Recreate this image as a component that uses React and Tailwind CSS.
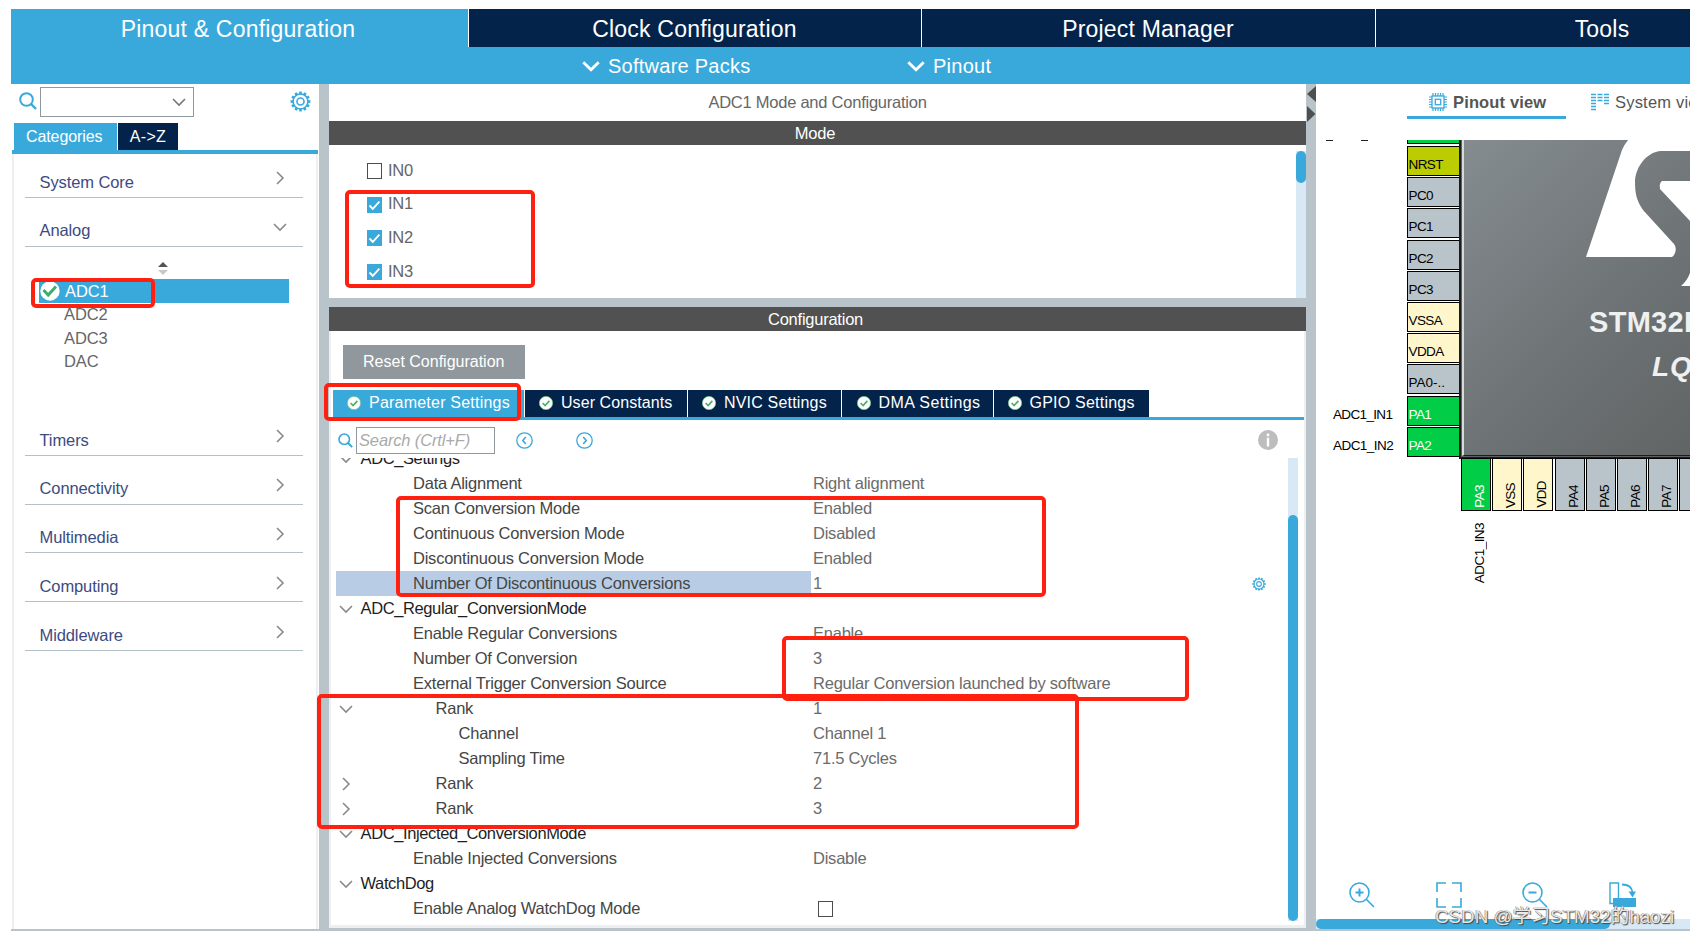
import React from 'react'

const categoriesTop = [
  { name: 'System Core', open: false },
  { name: 'Analog', open: true },
]

const categoriesBottom = ['Timers', 'Connectivity', 'Multimedia', 'Computing', 'Middleware']

const channels = [
  { name: 'IN0', checked: false },
  { name: 'IN1', checked: true },
  { name: 'IN2', checked: true },
  { name: 'IN3', checked: true },
]

const configTabs = [
  { name: 'Parameter Settings', className: 'w-[191px] pl-[14px] bg-[#39a9dc] tracking-[0.22px]' },
  { name: 'User Constants', className: 'w-[162px] pl-[14px] bg-[#03234b] tracking-[0.07px]' },
  { name: 'NVIC Settings', className: 'w-[152.5px] pl-[14px] bg-[#03234b] tracking-[0.18px]' },
  { name: 'DMA Settings', className: 'w-[151px] pl-[15px] bg-[#03234b] tracking-[0.42px]' },
  { name: 'GPIO Settings', className: 'w-[155px] pl-[14px] bg-[#03234b] tracking-[0.22px]' },
]

const rows = [
  { label: 'ADC_Settings', type: 'group', arrow: 'down' },
  { label: 'Data Alignment', type: 'item', value: 'Right alignment' },
  { label: 'Scan Conversion Mode', type: 'item', value: 'Enabled' },
  { label: 'Continuous Conversion Mode', type: 'item', value: 'Disabled' },
  { label: 'Discontinuous Conversion Mode', type: 'item', value: 'Enabled' },
  { label: 'Number Of Discontinuous Conversions', type: 'item', value: '1', selected: true },
  { label: 'ADC_Regular_ConversionMode', type: 'group', arrow: 'down' },
  { label: 'Enable Regular Conversions', type: 'item', value: 'Enable' },
  { label: 'Number Of Conversion', type: 'item', value: '3' },
  { label: 'External Trigger Conversion Source', type: 'item', value: 'Regular Conversion launched by software' },
  { label: 'Rank', type: 'rank', arrow: 'down', value: '1' },
  { label: 'Channel', type: 'sub', value: 'Channel 1' },
  { label: 'Sampling Time', type: 'sub', value: '71.5 Cycles' },
  { label: 'Rank', type: 'rank', arrow: 'right', value: '2' },
  { label: 'Rank', type: 'rank', arrow: 'right', value: '3' },
  { label: 'ADC_Injected_ConversionMode', type: 'group', arrow: 'down' },
  { label: 'Enable Injected Conversions', type: 'item', value: 'Disable' },
  { label: 'WatchDog', type: 'group', arrow: 'down' },
  { label: 'Enable Analog WatchDog Mode', type: 'item', checkbox: true },
]

const indent = {
  group: 'pl-[5.5px] text-[#1e1e1e] tracking-[-0.38px]',
  item: 'pl-[58px] text-[#454545] tracking-[-0.23px]',
  rank: 'pl-[80.5px] text-[#454545] tracking-[-0.23px]',
  sub: 'pl-[103.5px] text-[#454545] tracking-[-0.23px]',
}

const pinColors = {
  reset: 'bg-[#bbcc00] text-black',
  io: 'bg-[#b9c4ca] text-black',
  power: 'bg-[#fff6cc] text-black',
  used: 'bg-[#02cd46] text-white',
}

const leftPins = [
  { name: 'NRST', kind: 'reset' },
  { name: 'PC0', kind: 'io' },
  { name: 'PC1', kind: 'io' },
  { name: 'PC2', kind: 'io' },
  { name: 'PC3', kind: 'io' },
  { name: 'VSSA', kind: 'power' },
  { name: 'VDDA', kind: 'power' },
  { name: 'PA0-..', kind: 'io' },
  { name: 'PA1', kind: 'used' },
  { name: 'PA2', kind: 'used' },
]

const bottomPins = [
  { name: 'PA3', kind: 'used' },
  { name: 'VSS', kind: 'power' },
  { name: 'VDD', kind: 'power' },
  { name: 'PA4', kind: 'io' },
  { name: 'PA5', kind: 'io' },
  { name: 'PA6', kind: 'io' },
  { name: 'PA7', kind: 'io' },
  { name: '', kind: 'io' },
]

function Chevron({ dir = 'down', className = '', stroke = '#8a8a8a', width = 1.6 }) {
  return (
    <svg viewBox="0 0 14 14" className={className} fill="none" stroke={stroke} strokeWidth={width}>
      <path d={dir === 'down' ? 'M1 4l6 6 6-6' : 'M4 1l6 6-6 6'} />
    </svg>
  )
}

function Gear({ className }) {
  const teeth = [0, 30, 60, 90, 120, 150, 180, 210, 240, 270, 300, 330]
  return (
    <svg viewBox="0 0 22 22" className={className} fill="none" stroke="#39a9dc">
      <circle cx="11" cy="11" r="7.8" strokeWidth="1.7" />
      <circle cx="11" cy="11" r="3.7" strokeWidth="1.7" />
      {teeth.map((a) => (
        <path key={a} d="M11 3.4V0.6" strokeWidth="2.8" transform={`rotate(${a} 11 11)`} />
      ))}
    </svg>
  )
}

function SearchIcon({ className }) {
  return (
    <svg viewBox="0 0 18 18" className={className} fill="none" stroke="#39a9dc" strokeWidth="2">
      <circle cx="7.5" cy="7.5" r="6.3" />
      <path d="M12 12l5 5" strokeWidth="2.4" />
    </svg>
  )
}

function Checkbox({ checked }) {
  if (!checked) {
    return <span className="block w-[15px] h-[16px] border border-[#4c4c4c] bg-white" />
  }
  return (
    <span className="block w-[15px] h-[16px] bg-[#39a9dc]">
      <svg viewBox="0 0 15 16" className="w-full h-full" fill="none" stroke="#fff" strokeWidth="1.8">
        <path d="M2.5 8.5l3.3 3.4 6.6-7.2" />
      </svg>
    </span>
  )
}

function TabCheck() {
  return (
    <svg viewBox="0 0 14 14" className="w-[14px] h-[14px] shrink-0">
      <circle cx="7" cy="7" r="6.6" fill="#fff" stroke="#7cc893" strokeWidth="0.8" />
      <path d="M3.6 7l2.5 2.5 4.3-4.6" fill="none" stroke="#4cb06e" strokeWidth="1.7" />
    </svg>
  )
}

function Header() {
  return (
    <header className="ml-[10.5px] h-[75px] shrink-0 bg-[#39a9dc] text-white flex flex-col">
      <div className="flex h-[38px] text-[23px] leading-[40px] text-center whitespace-nowrap tracking-[0.2px]">
        <div className="w-[457px] shrink-0 pr-[2px]">Pinout &amp; Configuration</div>
        <div className="w-[453px] shrink-0 bg-[#03234b] border-l border-white">Clock Configuration</div>
        <div className="w-[454px] shrink-0 bg-[#03234b] border-l border-white">Project Manager</div>
        <div className="w-[454px] shrink-0 bg-[#03234b] border-l border-white">Tools</div>
      </div>
      <div className="flex h-[37px] items-center text-[20px] tracking-[0.25px]">
        <div className="flex items-center w-[325px] ml-[571px]">
          <Chevron className="w-[18px] h-[18px] mr-[8.5px]" stroke="#fff" width={2.2} />
          Software Packs
        </div>
        <div className="flex items-center">
          <Chevron className="w-[18px] h-[18px] mr-[8.5px]" stroke="#fff" width={2.2} />
          Pinout
        </div>
      </div>
    </header>
  )
}

function Category({ name, open }) {
  return (
    <div className="ml-[11px] w-[278px] h-[48.8px] shrink-0 pt-[11px] border-b border-[#b3c0c8] flex items-center justify-between pl-[14.5px] pr-[16px] text-[16.5px] tracking-[-0.1px] text-[#3c4b82]">
      <span className="pt-[7px]">{name}</span>
      <Chevron dir={open ? 'down' : 'right'} className="w-[14px] h-[14px]" />
    </div>
  )
}

function Sidebar() {
  return (
    <aside className="ml-[11px] w-[308px] shrink-0 flex flex-col">
      <div className="flex h-[39px] shrink-0 pt-[3px]">
        <SearchIcon className="w-[18px] h-[18px] ml-[8px] mt-[5px]" />
        <div className="ml-[3px] w-[154px] h-[30px] border border-[#8f989f] flex items-center justify-end pr-[7px]">
          <Chevron className="w-[14px] h-[14px]" stroke="#777" />
        </div>
        <Gear className="w-[21px] h-[21px] ml-[96px] mt-[4px]" />
      </div>
      <div className="flex h-[27px] shrink-0 pl-[3px] text-white text-[16px] leading-[28px]">
        <div className="w-[103px] bg-[#39a9dc] pl-[12px] tracking-[-0.1px]">Categories</div>
        <div className="w-[60px] ml-px bg-[#03234b] text-center tracking-[0.3px]">A-&gt;Z</div>
      </div>
      <div className="h-[3.5px] shrink-0 w-[306px] ml-px bg-[#39a9dc]" />
      <div className="grow ml-px w-[306px] border-x-2 border-[#eeeff0] flex flex-col">
        {/* first divider sits close under the tabs */}
        <div className="-mt-[4.5px]" />
        {categoriesTop.map((c) => (
          <Category key={c.name} {...c} />
        ))}
        <div className="h-[160.5px] shrink-0 pt-[15.5px] text-[16.5px] text-[#666]">
          <div className="h-[17px] pl-[144px]">
            <svg viewBox="0 0 10 13" className="w-[10px] h-[13px]">
              <path d="M0 5l5-5 5 5z" fill="#555" />
              <path d="M0 8h10l-5 5z" fill="#c8c8c8" />
            </svg>
          </div>
          <div className="ml-[25px] w-[250px] h-[24px] bg-[#39a9dc] text-white flex items-center tracking-[-0.1px]">
            <svg viewBox="0 0 20 20" className="w-[20px] h-[20px] ml-[1px] mr-[5px]">
              <circle cx="10" cy="10" r="9.7" fill="#fff" />
              <path d="M3.5 9l4.7 5L16 5.5" fill="none" stroke="#3fae68" strokeWidth="3" />
            </svg>
            ADC1
          </div>
          {['ADC2', 'ADC3', 'DAC'].map((name) => (
            <div key={name} className="h-[23.7px] leading-[23px] pl-[50px] tracking-[-0.1px]">{name}</div>
          ))}
        </div>
        {categoriesBottom.map((name) => (
          <Category key={name} name={name} />
        ))}
      </div>
    </aside>
  )
}

function ModePanel() {
  return (
    <section className="h-[214px] shrink-0 bg-white flex flex-col text-[16.5px] tracking-[-0.24px] text-[#666]">
      <div className="h-[37px] leading-[37px] text-center">ADC1 Mode and Configuration</div>
      <div className="h-[24px] leading-[24px] text-center text-white bg-[#505150] pr-[5px]">Mode</div>
      <div className="flex grow justify-between">
        <div className="pl-[38px] pt-[9px]">
          {channels.map((c) => (
            <div key={c.name} className="flex items-center h-[33.8px] gap-[6px]">
              <Checkbox checked={c.checked} />
              <span className="-mt-[2px]">{c.name}</span>
            </div>
          ))}
        </div>
        <div className="w-[10px] mt-[6px] bg-[#d8e8f5]">
          <div className="h-[32px] rounded-full bg-[#39a9dc]" />
        </div>
      </div>
    </section>
  )
}

function ParameterRow({ row }) {
  return (
    <div className="flex h-[25px] shrink-0 items-center text-[16.5px]">
      <div className={`w-[475px] h-full flex items-center ${row.selected ? 'bg-[#b8cde5]' : ''}`}>
        <div className="w-[19px] shrink-0 pl-[3px]">
          {row.arrow && <Chevron dir={row.arrow} className="w-[14px] h-[14px]" />}
        </div>
        <span className={`whitespace-nowrap ${indent[row.type]}`}>{row.label}</span>
      </div>
      <span className="pl-[2px] text-[#6b6b6b] whitespace-nowrap tracking-[-0.23px]">{row.value}</span>
      {row.checkbox && <div className="pl-[5px]"><Checkbox /></div>}
      {row.selected && <Gear className="w-[14px] h-[14px] ml-auto mr-[22px]" />}
    </div>
  )
}

function ConfigPanel() {
  return (
    <section className="h-[621px] shrink-0 bg-white flex flex-col">
      <div className="h-[24px] shrink-0 leading-[24px] text-center text-[16.5px] tracking-[-0.24px] text-white bg-[#505150] pr-[4px]">Configuration</div>
      <div className="grow min-h-0 border-x-2 border-b-[3px] border-[#eeeff0] flex flex-col">
        <div className="h-[58.5px] shrink-0 pt-[14px] pl-[12px]">
          <div className="w-[181.5px] h-[33.5px] bg-[#91989d] text-white text-[16px] leading-[33px] text-center">Reset Configuration</div>
        </div>
        <div className="flex h-[27px] shrink-0 gap-px pl-[2px] text-white text-[16px]">
          {configTabs.map((t) => (
            <div key={t.name} className={`flex items-center gap-[8px] whitespace-nowrap shrink-0 ${t.className}`}>
              <TabCheck />
              {t.name}
            </div>
          ))}
        </div>
        <div className="h-[3.5px] shrink-0 bg-[#39a9dc]" />
        <div className="flex h-[38px] shrink-0 pt-[6.5px] pl-[7px]">
          <SearchIcon className="w-[15px] h-[15px] mt-[6px]" />
          <div className="ml-[3px] w-[139px] h-[27px] border border-[#8f989f] pl-[2px] leading-[25px] text-[16.5px] tracking-[-0.15px] italic text-[#aaa] whitespace-nowrap">Search (Crtl+F)</div>
          {['M9.8 5L6.8 8.5l3 3.5', 'M7.2 5l3 3.5-3 3.5'].map((d, i) => (
            <svg key={d} viewBox="0 0 17 17" className={`w-[17px] h-[17px] mt-[5px] ${i === 0 ? 'ml-[21px]' : 'ml-[43px]'}`} fill="none" stroke="#39a9dc" strokeWidth="1.3">
              <circle cx="8.5" cy="8.5" r="7.7" />
              <path d={d} strokeWidth="1.6" />
            </svg>
          ))}
          <svg viewBox="0 0 20 20" className="w-[20px] h-[20px] ml-auto mr-[26px] mt-[3.5px]">
            <circle cx="10" cy="10" r="10" fill="#bdbdbd" />
            <path d="M10 3.5v2.7M10 7.8v8.7" stroke="#fff" strokeWidth="2.4" />
          </svg>
        </div>
        <div className="flex grow min-h-0 pl-[5px] mb-[4px]">
          <div className="w-[952px] overflow-hidden flex flex-col justify-end">
            {rows.map((r, i) => (
              <ParameterRow key={i} row={r} />
            ))}
          </div>
          <div className="w-[10px] pt-[57px] bg-[#d8e8f5]">
            <div className="h-full rounded-full bg-[#39a9dc]" />
          </div>
        </div>
      </div>
    </section>
  )
}

function Splitter() {
  return (
    <div className="w-[10px] shrink-0 bg-[#b9c4ca]">
      <svg viewBox="0 0 10 40" className="w-[10px] h-[40px]" fill="#4d4f50">
        <path d="M10 2v16L1 10z" />
        <path d="M1 22v16l8.5-8z" />
      </svg>
    </div>
  )
}

function Chip() {
  return (
    <div className="absolute left-[143px] top-0 w-[400px] h-[319px] overflow-hidden">
      <div className="absolute left-0 top-0 w-[400px] h-[319px] bg-[#5c6062] border-l-2 border-b-2 border-[#1c1c1c]" />
      <div className="absolute left-[3px] top-0 w-[400px] h-[316px] border-l-2 border-[#d7dadb] border-b-[1px] border-b-[#1c1c1c] bg-linear-135 from-[#858c90] via-[#6b7072] to-[#585a58]" />
      <svg viewBox="0 0 231 150" className="absolute left-0 top-0 w-[231px] h-[150px]" fill="#fff">
        <path d="M169 0H231V11H202C188 12 177 26 176 41C176 52 177 60 184 70L215 104C218 108 217 114 213 117H127L163 10Q165 5 169 0Z" />
        <path d="M231 41H203Q200 43 201 49L231 81Z" />
        <path d="M231 133Q228 141 222 146H231Z" />
      </svg>
      <div className="absolute left-[130px] top-[166px] text-[29px] leading-[32px] font-bold text-[#eff0f0] tracking-[0.3px] whitespace-nowrap">STM32F103RCTx</div>
      <div className="absolute left-[193px] top-[211px] text-[28px] leading-[32px] font-bold italic text-[#eff0f0] tracking-[1px] whitespace-nowrap">LQFP64</div>
    </div>
  )
}

// pins sit on a free canvas, so each one is placed by its index
function PinCanvas() {
  return (
    <div className="relative grow overflow-hidden text-[13.5px]">
      <span className="absolute left-[10px] -top-px w-[7px] h-[2px] bg-[#222]" />
      <span className="absolute left-[45px] -top-px w-[7px] h-[2px] bg-[#222]" />
      <div className="absolute left-[91px] -top-[26px] w-[53px] h-[30px] border border-black bg-[#02cd46]" />
      {leftPins.map((p, i) => (
        <div
          key={p.name}
          className={`absolute left-[91px] w-[53px] h-[30px] border border-black pl-[0.5px] pt-[9px] leading-[18px] ${p.name === 'PA0-..' ? 'tracking-[0px]' : 'tracking-[-0.6px]'} ${pinColors[p.kind]}`}
          style={{ top: 6 + i * 31.2 }}
        >
          {p.name}
        </div>
      ))}
      <Chip />
      {bottomPins.map((p, i) => (
        <div
          key={i}
          className={`absolute top-[318px] w-[30px] h-[53px] border border-black ${pinColors[p.kind]}`}
          style={{ left: 145 + i * 31.2 }}
        >
          <span className="absolute left-[9px] bottom-[2px] leading-[18px] tracking-[-0.6px] rotate-180 [writing-mode:vertical-rl]">{p.name}</span>
        </div>
      ))}
      <span className="absolute left-[17px] top-[266px] leading-[18px] tracking-[-0.65px]">ADC1_IN1</span>
      <span className="absolute left-[17px] top-[297px] leading-[18px] tracking-[-0.55px]">ADC1_IN2</span>
      <span className="absolute left-[155px] top-[383px] leading-[18px] tracking-[-0.55px] rotate-180 [writing-mode:vertical-rl]">ADC1_IN3</span>
    </div>
  )
}

function ViewTabs() {
  const legs = [4, 6.5, 9, 11.5, 14]
  return (
    <div className="flex h-[56px] shrink-0 pl-[91px] text-[16.5px] text-[#555] whitespace-nowrap">
      <div className="w-[159px] h-[34.5px] shrink-0 border-b-[3.5px] border-[#39a9dc] flex items-center pl-[22px] pt-[6px] font-bold tracking-[0.15px]">
        <svg viewBox="0 0 18 18" className="w-[18px] h-[18px] mr-[6px] mt-[-2px] shrink-0" fill="none" stroke="#39a9dc">
          <rect x="3" y="3" width="12" height="12" strokeWidth="1.3" />
          <rect x="6.3" y="6.3" width="5.4" height="5.4" strokeWidth="1.3" />
          {legs.map((n) => (
            <path key={n} d={`M${n} 0v3M${n} 15v3M0 ${n}h3M15 ${n}h3`} strokeWidth="1.2" />
          ))}
        </svg>
        Pinout view
      </div>
      <div className="flex items-center h-[31px] pt-[6px] ml-[25px] tracking-[0.2px] shrink-0">
        <svg viewBox="0 0 18 18" className="w-[18px] h-[18px] mr-[6px] mt-[-2px] shrink-0" fill="none" stroke="#39a9dc" strokeWidth="1.6">
          <path d="M0 1.5h5M0 4.5h5M0 7.5h5M0 10.5h5M0 13.5h5M0 16.5h5M6.5 1.5h5M6.5 4.5h5M6.5 7.5h5M13 1.5h5M13 4.5h5M13 7.5h5M13 10.5h5" />
        </svg>
        System view
      </div>
    </div>
  )
}

function ViewTools() {
  return (
    <div className="flex h-[37px] shrink-0 pl-[33px] gap-[60.5px]">
      <svg viewBox="0 0 26 26" className="w-[26px] h-[26px]" fill="none" stroke="#39a9dc" strokeWidth="1.6">
        <circle cx="10.5" cy="10.5" r="9.5" />
        <path d="M17.5 17.5l7.5 7.5" />
        <path d="M10.5 6.5v8M6.5 10.5h8" strokeWidth="2" />
      </svg>
      <svg viewBox="0 0 26 26" className="w-[26px] h-[26px]" fill="none" stroke="#39a9dc" strokeWidth="1.6">
        <path d="M1 10V1h9M16 1h9v9M25 16v9h-9M10 25H1v-9" />
      </svg>
      <svg viewBox="0 0 26 26" className="w-[26px] h-[26px]" fill="none" stroke="#39a9dc" strokeWidth="1.6">
        <circle cx="10.5" cy="10.5" r="9.5" />
        <path d="M17.5 17.5l7.5 7.5" />
        <path d="M6.5 10.5h8" strokeWidth="2" />
      </svg>
      <svg viewBox="0 0 27 26" className="w-[27px] h-[26px]" fill="none" stroke="#39a9dc" strokeWidth="1.4">
        <path d="M4 21.5H1V1h8.5v15" />
        <path d="M4 16h23v9H4z" fill="#39a9dc" stroke="none" />
        <path d="M13 2.5c6 0 10 3 10.500 8" strokeWidth="1.8" />
        <path d="M19.500 9.500H27l-3.500 6z" fill="#39a9dc" stroke="none" />
      </svg>
    </div>
  )
}

function PinoutPanel() {
  return (
    <section className="w-[374px] shrink-0 bg-white flex flex-col overflow-hidden">
      <ViewTabs />
      <PinCanvas />
      <ViewTools />
      <div className="h-[10px] shrink-0 bg-[#d8e8f5]">
        <div className="w-[294px] h-full rounded-full bg-[#39a9dc]" />
      </div>
    </section>
  )
}

const marks = [
  'left-[31px] top-[278px] w-[124px] h-[30px]',
  'left-[345px] top-[190px] w-[190px] h-[98px]',
  'left-[324px] top-[383px] w-[197px] h-[38px]',
  'left-[396px] top-[496px] w-[650px] h-[101px]',
  'left-[782px] top-[636px] w-[407px] h-[65px]',
  'left-[317px] top-[694px] w-[762px] h-[135px]',
]

export default function App() {
  return (
    <div className="relative w-[1690px] h-[936px] overflow-hidden bg-white pt-[9px] flex flex-col font-['Liberation_Sans',Arial,sans-serif]">
      <Header />
      <main className="flex h-[845px] shrink-0">
        <Sidebar />
        <div className="w-[10px] shrink-0 bg-[#b9c4ca]" />
        <div className="w-[977px] shrink-0 flex flex-col gap-[9px] bg-[#b9c4ca]">
          <ModePanel />
          <ConfigPanel />
        </div>
        <Splitter />
        <PinoutPanel />
      </main>
      <div className="ml-[11px] h-[2px] shrink-0 bg-[#b9c4ca]" />

      {marks.map((m) => (
        <div key={m} className={`absolute border-4 border-[#ff2010] rounded-[5px] ${m}`} />
      ))}

      <div className="absolute left-[1435px] top-[903px] text-[18.8px] leading-[28px] whitespace-nowrap text-[#e6e6e6] font-['Liberation_Sans','Noto_Sans_CJK_SC',sans-serif] [text-shadow:1px_1px_1px_#444,-0.5px_-0.5px_0.5px_#777]">
        CSDN @学习STM32的haozi
      </div>
    </div>
  )
}
